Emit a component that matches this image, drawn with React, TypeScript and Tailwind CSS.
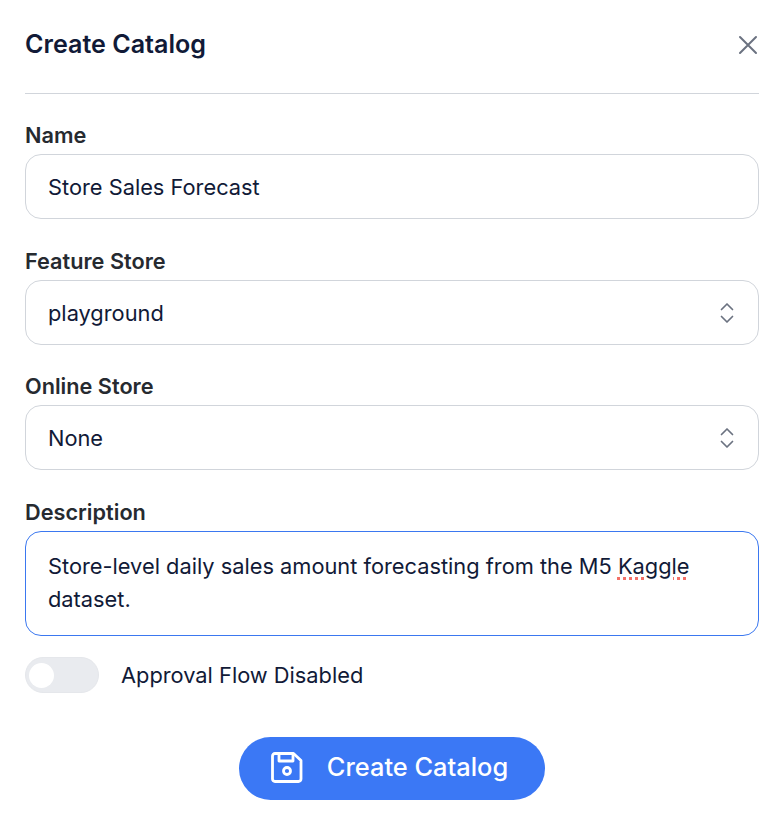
import React from "react";

function Chevrons() {
  return (
    <svg width="16" height="24" viewBox="0 0 16 24" fill="none" stroke="#6b7280" strokeWidth="1.700" strokeLinecap="round" strokeLinejoin="round">
      <path d="M2.500 8.500 8 3l5.500 5.500" />
      <path d="M2.500 15.500 8 21l5.500-5.500" />
    </svg>
  );
}

function Label({ children }: { children: React.ReactNode }) {
  return <div className="text-[21.7px] leading-[30px] font-semibold text-[#262a30]">{children}</div>;
}

function Select({ value }: { value: string }) {
  return (
    <div className="mt-[4px] flex h-[65px] items-center justify-between rounded-[16px] border border-[#d1d5db] pl-[22px] pr-[23px] text-[21.8px] text-[#111a37]">
      <span className="pt-[1px]">{value}</span>
      <Chevrons />
    </div>
  );
}

export default function App() {
  return (
    <div className="h-[824px] w-[784px] bg-white px-[25px] font-['Inter',sans-serif]">
      <div className="flex h-[94px] items-center justify-between border-b border-[#d1d5db] pb-[3px]">
        <h1 className="text-[25.100px] font-semibold text-[#111a37]">Create Catalog</h1>
        <svg className="mr-px" width="20" height="20" viewBox="0 0 20 20" fill="none" stroke="#6b7280" strokeWidth="2" strokeLinecap="round">
          <path d="M2 2l16 16M18 2 2 18" />
        </svg>
      </div>
      <div className="mt-[26px]">
        <Label>Name</Label>
        <div className="mt-[4px] flex h-[65px] items-center rounded-[16px] border border-[#d1d5db] px-[22px] text-[21.8px] text-[#111a37]">
          <span className="pt-[1px]">Store Sales Forecast</span>
        </div>
      </div>
      <div className="mt-[27px]">
        <Label>Feature Store</Label>
        <Select value="playground" />
      </div>
      <div className="mt-[26px]">
        <Label>Online Store</Label>
        <Select value="None" />
      </div>
      <div className="mt-[27px]">
        <Label>Description</Label>
        <div className="mt-[4px] h-[105px] rounded-[16px] border border-[#3b78f0] px-[22px] pt-[18px] text-[21.8px] leading-[33px] text-[#111a37]">
          Store-level daily sales amount forecasting from the M5{" "}
          <span className="underline decoration-dotted decoration-[#f47067] decoration-[3px] underline-offset-[3px]">Kaggle</span> dataset.
        </div>
      </div>
      <div className="mt-[21px] flex items-center gap-[22px]">
        <div className="flex h-[36px] w-[74px] items-center rounded-full border border-[#e5e7eb] bg-[#e9ebef] pl-[3px]">
          <div className="h-[25px] w-[25px] rounded-full bg-white" />
        </div>
        <span className="text-[21.8px] text-[#111a37]">Approval Flow Disabled</span>
      </div>
      <div className="mt-[44px] flex justify-center">
        <button className="flex h-[63px] w-[306px] items-center justify-center gap-[24px] rounded-full bg-[#3b78f5] pr-[6px] pb-[2px] text-[25.400px] font-medium text-white">
          <svg width="33" height="33" viewBox="0 0 33 33" fill="none" stroke="white" strokeWidth="2.800" strokeLinejoin="round">
            <path d="M2.500 5A2.500 2.500 0 0 1 5 2.500h18.500L31 9.500v18.500a2.500 2.500 0 0 1-2.500 2.500H5A2.500 2.500 0 0 1 2.500 28z" />
            <path d="M9 2.500v7.500h14V2.500" />
            <circle cx="17" cy="20" r="3.500" />
          </svg>
          Create Catalog
        </button>
      </div>
    </div>
  );
}
